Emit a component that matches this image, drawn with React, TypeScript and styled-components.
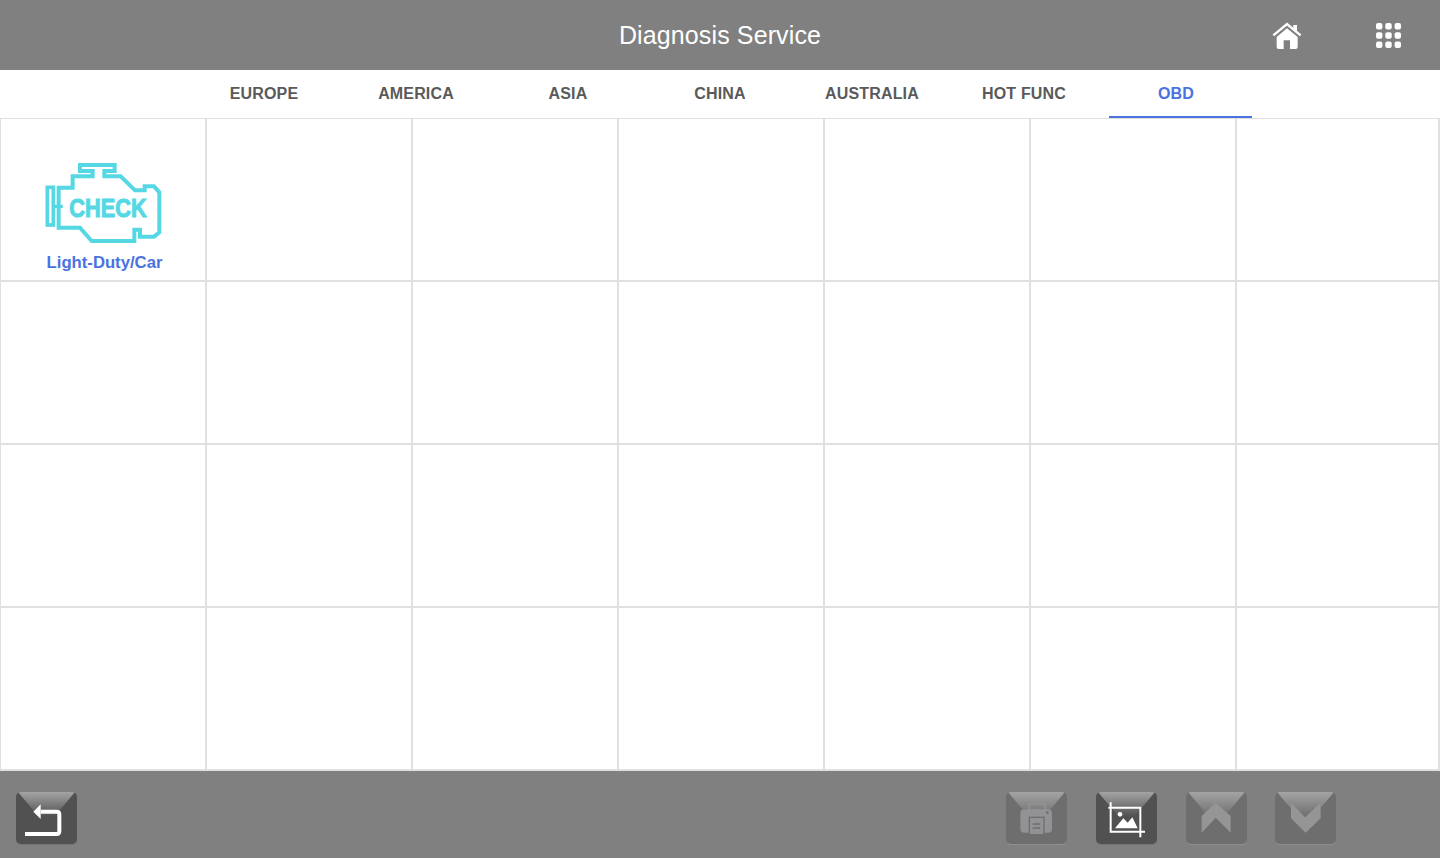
import {type FC, type ReactNode} from 'react';
import styled, {createGlobalStyle} from 'styled-components';

const GlobalStyle = createGlobalStyle`
  html, body {
    margin: 0;
    padding: 0;
    background: #fff;
    font-family: 'Liberation Sans', Arial, sans-serif;
  }
`;

const Page = styled.div`
  width: 1440px;
  height: 858px;
  display: flex;
  flex-direction: column;
  overflow: hidden;
`;

const Header = styled.header`
  height: 70px;
  background: #808080;
  display: grid;
  grid-template-columns: 1fr auto 1fr;
  align-items: center;
`;

const Title = styled.h1`
  grid-column: 2;
  margin: 0;
  font-size: 25px;
  font-weight: 400;
  letter-spacing: 0.12px;
  color: #fff;
`;

const HeaderActions = styled.div`
  grid-column: 3;
  display: flex;
  justify-content: flex-end;
  align-items: center;
  gap: 73px;
  padding: 2px 38px 0 0;
`;

const TabBar = styled.nav`
  height: 48px;
  display: flex;
  padding-left: 188px;
`;

const Tab = styled.div<{$active?: boolean}>`
  position: relative;
  width: 152px;
  display: flex;
  align-items: center;
  justify-content: center;
  font-size: 16px;
  font-weight: 700;
  letter-spacing: 0.15px;
  color: ${props => (props.$active ? '#4a72e0' : '#5a5a5a')};

  &::after {
    content: '';
    display: ${props => (props.$active ? 'block' : 'none')};
    position: absolute;
    left: 9px;
    right: 0;
    bottom: 0;
    height: 2px;
    background: #4a72e0;
  }
`;

const Grid = styled.section`
  height: 653px;
  box-sizing: border-box;
  border-top: 1px solid #e0e0e0;
  border-left: 1px solid #e0e0e0;
  display: grid;
  grid-template-columns: repeat(6, 206px) 1fr;
  grid-template-rows: repeat(4, 163px);
`;

const Cell = styled.div`
  box-sizing: border-box;
  border-right: 2px solid #e0e0e0;
  border-bottom: 2px solid #e0e0e0;
  display: flex;
  flex-direction: column;
  align-items: center;
  padding-top: 43px;

  svg {
    margin-left: 2px;
  }
`;

const CellLabel = styled.span`
  margin: 8px 0 0 3px;
  font-size: 16.7px;
  font-weight: 700;
  line-height: 18px;
  color: #4a72e0;
`;

const Footer = styled.footer`
  flex: 1;
  background: #808080;
  display: flex;
  align-items: flex-start;
  padding: 21px 104px 0 16px;
`;

const RightButtons = styled.div`
  margin-left: auto;
  display: flex;
  gap: 29px;

  & > div:last-child {
    margin-left: -1px;
  }
`;

const ToolButton = styled.div<{$disabled?: boolean}>`
  position: relative;
  width: 61px;
  height: 52px;
  border-radius: 5px;
  overflow: hidden;
  background: ${props => (props.$disabled ? '#6e6e6e' : '#515151')};
  box-shadow: ${props =>
    props.$disabled ? '0 2px 0 -1px #8e8e8e' : '0 1px 0 #747474'};

  &::before {
    content: '';
    position: absolute;
    left: 2px;
    right: 2px;
    top: 0;
    height: 34px;
    clip-path: polygon(0 0, 100% 0, 50% 100%);
    background: linear-gradient(
      to bottom,
      #a4a4a4 0,
      ${props => (props.$disabled ? '#6e6e6e' : '#515151')} 72%
    );
  }

  svg {
    position: relative;
    display: block;
  }
`;

const ButtonIcon: FC<{children: ReactNode}> = ({children}) => (
  <svg width="61" height="52" viewBox="0 0 183 156">
    {children}
  </svg>
);

const HomeIcon = () => (
  <svg width="32" height="30" viewBox="66 62 94 90">
    <path d="M72 105 L113 71 L154 105" fill="none" stroke="#fff" strokeWidth="7" />
    <rect x="132" y="74" width="11" height="17" fill="#fff" />
    <path
      d="M82 110 L113 84 L145 110 V140 Q145 146 139 146 H122 V120 H103 V146 H88 Q82 146 82 140 Z"
      fill="#fff"
    />
  </svg>
);

const AppsIcon = () => (
  <svg width="26" height="26" viewBox="0 0 26 26">
    {[0, 1, 2].flatMap(row =>
      [0, 1, 2].map(col => (
        <rect
          key={`${row}-${col}`}
          x={col * 9.3}
          y={row * 9.3}
          width="6.4"
          height="6.4"
          rx="2"
          fill="#fff"
        />
      )),
    )}
  </svg>
);

const CheckEngineIcon = () => (
  <svg width="120" height="84" viewBox="132 155 360 252">
    <g fill="none" stroke="#55d8e3" strokeWidth="12">
      <path d="M240 164 H344 V182 H313 V198 H362 L405 240 H434 V228 H462 L478 246 V366 L462 379 H420 V358 H403 V392 H275 L240 352 H176 V232 H218 V198 H278 V182 H240 Z" />
      <rect x="142" y="231" width="18" height="113" strokeWidth="11" />
      <path d="M160 288 H188" strokeWidth="10" />
    </g>
    <text
      x="208"
      y="320"
      fontFamily="'Liberation Sans', Arial, sans-serif"
      fontSize="76"
      fontWeight="700"
      fill="#55d8e3"
      stroke="#55d8e3"
      strokeWidth="3"
      textLength="232"
      lengthAdjust="spacingAndGlyphs">
      CHECK
    </text>
  </svg>
);

const tabs = ['EUROPE', 'AMERICA', 'ASIA', 'CHINA', 'AUSTRALIA', 'HOT FUNC', 'OBD'];

const App: FC = () => (
  <Page>
    <GlobalStyle />
    <Header>
      <Title>Diagnosis Service</Title>
      <HeaderActions>
        <HomeIcon />
        <AppsIcon />
      </HeaderActions>
    </Header>
    <TabBar>
      {tabs.map(tab => (
        <Tab key={tab} $active={tab === 'OBD'}>
          {tab}
        </Tab>
      ))}
    </TabBar>
    <Grid>
      {Array.from({length: 28}, (_, index) => (
        <Cell key={index}>
          {index === 0 && (
            <>
              <CheckEngineIcon />
              <CellLabel>Light-Duty/Car</CellLabel>
            </>
          )}
        </Cell>
      ))}
    </Grid>
    <Footer>
      <ToolButton>
        <ButtonIcon>
          <path d="M52 59 L74 37 V81 Z" fill="#fff" />
          <path
            d="M74 59 H122 Q130 59 130 67 V118 Q130 126 122 126 H27"
            fill="none"
            stroke="#fff"
            strokeWidth="12"
          />
        </ButtonIcon>
      </ToolButton>
      <RightButtons>
        <ToolButton $disabled>
          <ButtonIcon>
            <rect x="70" y="36" width="47" height="20" fill="none" stroke="#929296" strokeWidth="5" />
            <rect x="43" y="52" width="95" height="70" rx="12" fill="#929296" />
            <rect x="70" y="76" width="44" height="52" fill="#929296" stroke="#6e6e6e" strokeWidth="4" />
            <path d="M80 96 H103 M80 108 H103" stroke="#6e6e6e" strokeWidth="4" />
            <circle cx="124" cy="62" r="4" fill="#6e6e6e" />
          </ButtonIcon>
        </ToolButton>
        <ToolButton>
          <ButtonIcon>
            <path
              d="M44 31 V119 H147 M37 47 H133 V136"
              fill="none"
              stroke="#fff"
              strokeWidth="6"
            />
            <circle cx="72" cy="67" r="7" fill="#fff" />
            <path d="M57 109 L82 79 L95 92 L109 76 L125 109 Z" fill="#fff" />
          </ButtonIcon>
        </ToolButton>
        <ToolButton $disabled>
          <ButtonIcon>
            <path d="M47 72 L89 32 L134 72 V122 L89 77 L47 122 Z" fill="#959595" />
          </ButtonIcon>
        </ToolButton>
        <ToolButton $disabled>
          <ButtonIcon>
            <path d="M48 32 L90 76 L137 32 V79 L92 122 L48 79 Z" fill="#959595" />
          </ButtonIcon>
        </ToolButton>
      </RightButtons>
    </Footer>
  </Page>
);

export default App;
